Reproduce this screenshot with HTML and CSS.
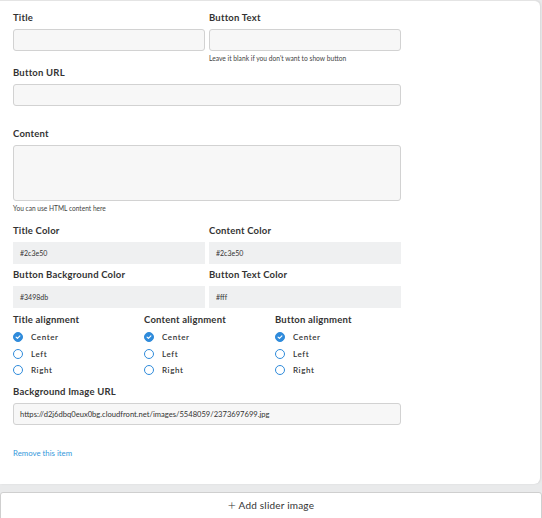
FILE: index.html
```html
<!DOCTYPE html>
<html>
<head>
<meta charset="utf-8">
<link rel="stylesheet" href="styles.css">
</head>
<body>
<div class="card">
  <div class="row2">
    <div class="field">
      <label class="lbl">Title</label>
      <div class="inp"></div>
    </div>
    <div class="field">
      <label class="lbl">Button Text</label>
      <div class="inp"></div>
      <div class="hint">Leave it blank if you don't want to show button</div>
    </div>
  </div>
  <div class="field url">
    <label class="lbl">Button URL</label>
    <div class="inp wide"></div>
  </div>
  <div class="field content">
    <label class="lbl">Content</label>
    <div class="inp wide area"></div>
    <div class="hint">You can use HTML content here</div>
  </div>
  <div class="row2 colors">
    <div class="field">
      <label class="lbl">Title Color</label>
      <div class="cinp">#2c3e50</div>
    </div>
    <div class="field">
      <label class="lbl">Content Color</label>
      <div class="cinp">#2c3e50</div>
    </div>
  </div>
  <div class="row2 colors2">
    <div class="field">
      <label class="lbl">Button Background Color</label>
      <div class="cinp">#3498db</div>
    </div>
    <div class="field">
      <label class="lbl">Button Text Color</label>
      <div class="cinp">#fff</div>
    </div>
  </div>
  <div class="row3">
    <div class="group">
      <div class="lbl">Title alignment</div>
      <div class="opt"><span class="radio on"><svg viewBox="0 0 10 10"><path d="M2.6 5.1 L4.3 6.8 L7.4 3.6" /></svg></span>Center</div>
      <div class="opt"><span class="radio"></span>Left</div>
      <div class="opt"><span class="radio"></span>Right</div>
    </div>
    <div class="group">
      <div class="lbl">Content alignment</div>
      <div class="opt"><span class="radio on"><svg viewBox="0 0 10 10"><path d="M2.6 5.1 L4.3 6.8 L7.4 3.6" /></svg></span>Center</div>
      <div class="opt"><span class="radio"></span>Left</div>
      <div class="opt"><span class="radio"></span>Right</div>
    </div>
    <div class="group">
      <div class="lbl">Button alignment</div>
      <div class="opt"><span class="radio on"><svg viewBox="0 0 10 10"><path d="M2.6 5.1 L4.3 6.8 L7.4 3.6" /></svg></span>Center</div>
      <div class="opt"><span class="radio"></span>Left</div>
      <div class="opt"><span class="radio"></span>Right</div>
    </div>
  </div>
  <div class="field bg">
    <label class="lbl">Background Image URL</label>
    <div class="inp wide val">https://d2j6dbq0eux0bg.cloudfront.net/images/5548059/2373697699.jpg</div>
  </div>
  <a class="remove">Remove this item</a>
</div>
<div class="add"><span class="plus">+</span> Add slider image</div>
</body>
</html>
```
FILE: styles.css
```css
* { box-sizing: border-box; }
html, body { margin: 0; padding: 0; }
body {
  background: #e9eaeb;
  font-family: "Lato", "Noto Sans", sans-serif;
  color: #333;
  width: 542px;
  height: 518px;
  overflow: hidden;
}
.card {
  background: #fff;
  width: 540px;
  height: 484px;
  border-top: 1px solid #e4e4e4;
  border-radius: 0 6px 6px 0;
  padding: 11px 13px 0 13px;
  box-shadow: 1px 0 2px rgba(0,0,0,0.08);
}
.row2 {
  display: grid;
  grid-template-columns: 192px 192px;
  column-gap: 4px;
}
.field { display: flex; flex-direction: column; }
.lbl {
  font-size: 9.5px;
  font-weight: 700;
  color: #333;
  letter-spacing: 0.2px;
  line-height: 12px;
  margin-bottom: 5px;
}
.inp {
  height: 22px;
  background: #f7f7f7;
  border: 1px solid #d2d2d2;
  border-radius: 3px;
}
.inp.wide { width: 388px; }
.area { height: 56px; }
.hint {
  font-size: 6.7px;
  color: #444;
  margin-top: 3px;
  line-height: 8px;
}
.content .hint { font-size: 6.6px; }
.url { margin-top: 5px; }
.content { margin-top: 22px; }
.content .lbl { margin-bottom: 5px; }
.colors { margin-top: 13px; }
.colors2 { margin-top: 5px; }
.cinp {
  height: 22px;
  background: #eff0f1;
  font-size: 7px;
  line-height: 22px;
  padding-left: 7px;
  color: #333;
}
.row3 {
  display: grid;
  grid-template-columns: 131px 131px 131px;
  margin-top: 6px;
}
.group .lbl { margin-bottom: 3px; }
.opt {
  display: flex;
  align-items: center;
  height: 16.5px;
  font-size: 8px;
  font-weight: 600;
  letter-spacing: 0.6px;
  color: #333;
}
.radio {
  width: 10px;
  height: 10px;
  border-radius: 50%;
  border: 1.3px solid #2f8bdb;
  margin: 0 8px 0 0;
  display: inline-flex;
  flex: none;
}
.radio.on { background: #2f8bdb; border-color: #2f8bdb; }
.radio svg { width: 100%; height: 100%; }
.radio svg path { fill: none; stroke: #fff; stroke-width: 1.4; stroke-linecap: round; stroke-linejoin: round; }
.bg { margin-top: 7px; }
.val {
  font-size: 7.6px;
  line-height: 20px;
  padding-left: 6px;
  color: #333;
}
.remove {
  display: block;
  margin-top: 23px;
  font-size: 7.8px;
  color: #3498db;
}
.add {
  margin-top: 8px;
  height: 30px;
  background: #fff;
  border: 1px solid #cfcfcf;
  border-radius: 3px;
  text-align: center;
  font-size: 10px;
  line-height: 24px;
  color: #333;
  letter-spacing: 0.2px;
}
.plus { font-size: 14px; font-weight: 300; vertical-align: -1px; }
```
